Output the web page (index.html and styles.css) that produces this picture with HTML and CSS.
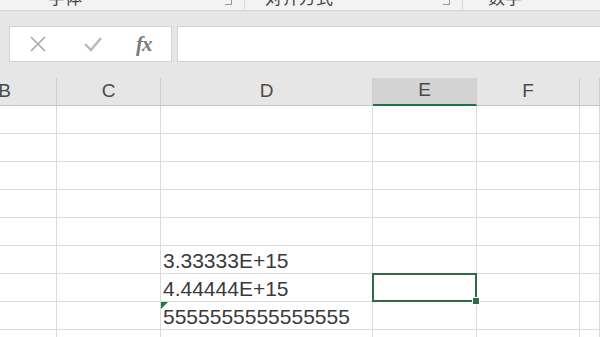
FILE: index.html
```html
<!DOCTYPE html>
<html lang="zh">
<head>
<meta charset="utf-8">
<link rel="stylesheet" href="styles.css">
</head>
<body>
<div class="ribbon">
  <div class="group g1"><span class="label">字体</span><span class="launch"></span></div>
  <div class="group g2"><span class="label">对齐方式</span><span class="launch"></span></div>
  <div class="group g3"><span class="label">数字</span></div>
</div>
<div class="fbar">
  <div class="fbox">
    <svg class="ic" width="18" height="18" viewBox="0 0 18 18"><path d="M2 2 L16 16 M16 2 L2 16" stroke="#a8a8a8" stroke-width="1.6" fill="none"/></svg>
    <svg class="ic" width="20" height="18" viewBox="0 0 20 18"><path d="M2 9 L8 15 L18 3" stroke="#b8b8b8" stroke-width="2.4" fill="none"/></svg>
    <span class="fx">fx</span>
  </div>
  <div class="finput"></div>
</div>
<div class="sheet">
  <div class="hd">B</div><div class="hd">C</div><div class="hd">D</div><div class="hd sel">E</div><div class="hd">F</div><div class="hd"></div>

  <div class="c"></div><div class="c"></div><div class="c"></div><div class="c"></div><div class="c"></div><div class="c"></div>
  <div class="c"></div><div class="c"></div><div class="c"></div><div class="c"></div><div class="c"></div><div class="c"></div>
  <div class="c"></div><div class="c"></div><div class="c"></div><div class="c"></div><div class="c"></div><div class="c"></div>
  <div class="c"></div><div class="c"></div><div class="c"></div><div class="c"></div><div class="c"></div><div class="c"></div>
  <div class="c"></div><div class="c"></div><div class="c"></div><div class="c"></div><div class="c"></div><div class="c"></div>
  <div class="c"></div><div class="c"></div><div class="c num">3.33333E+15</div><div class="c"></div><div class="c"></div><div class="c"></div>
  <div class="c"></div><div class="c"></div><div class="c num">4.44444E+15</div><div class="c active"></div><div class="c"></div><div class="c"></div>
  <div class="c"></div><div class="c"></div><div class="c num txt">5555555555555555</div><div class="c"></div><div class="c"></div><div class="c"></div>
  <div class="c"></div><div class="c"></div><div class="c"></div><div class="c"></div><div class="c"></div><div class="c"></div>
</div>
</body>
</html>
```

FILE: styles.css
```css
html, body {
  margin: 0;
  padding: 0;
}
body {
  width: 600px;
  height: 337px;
  overflow: hidden;
  background: #e6e6e6;
  font-family: "Liberation Sans", "Noto Sans CJK SC", sans-serif;
}
.ribbon {
  display: flex;
  height: 10px;
  background: #f3f3f3;
  border-bottom: 1px solid #d4d4d4;
  overflow: hidden;
}
.group {
  display: flex;
  align-items: flex-start;
  height: 10px;
  box-sizing: border-box;
  border-right: 1px solid #d8d8d8;
}
.g1 { width: 245px; padding-left: 48px; }
.g2 { width: 218px; padding-left: 20px; }
.g3 { flex: 1; padding-left: 25px; border-right: 0; }
.label {
  font-size: 17px;
  line-height: 17px;
  margin-top: -12px;
  color: #444;
  font-family: "Noto Sans CJK SC", sans-serif;
  flex: 1;
}
.launch {
  width: 6px;
  height: 4px;
  margin: 0 12px 0 0;
  border-right: 1px solid #999;
  border-bottom: 1px solid #999;
}
.fbar {
  display: flex;
  gap: 5px;
  padding: 15px 0 16px 9px;
}
.fbox {
  width: 163px;
  height: 36px;
  box-sizing: border-box;
  background: #fff;
  border: 1px solid #d2d2d2;
  display: flex;
  align-items: center;
  padding-left: 19px;
}
.ic { display: block; }
.ic + .ic { margin-left: 36px; }
.fx {
  margin-left: 33px;
  font-family: "Liberation Serif", serif;
  font-style: italic;
  font-weight: bold;
  font-size: 21px;
  color: #7a7a7a;
  letter-spacing: -1px;
}
.finput {
  flex: 1;
  height: 36px;
  box-sizing: border-box;
  background: #fff;
  border: 1px solid #d2d2d2;
  border-right: 0;
}
.sheet {
  display: grid;
  grid-template-columns: 57px 104px 212px 104px 103px 1fr;
  grid-template-rows: 28px;
  grid-auto-rows: 28px;
  background: #fff;
}
.hd {
  background: #e6e6e6;
  box-sizing: border-box;
  border-right: 1px solid #cdcdcd;
  border-bottom: 1px solid #c4c4c4;
  display: flex;
  align-items: center;
  justify-content: center;
  font-size: 19px;
  color: #4a4a4a;
  padding-bottom: 2px;
}
.hd:first-child {
  justify-content: flex-end;
  padding-right: 45px;
}
.hd.sel {
  background: #d3d3d3;
  border-bottom: 2px solid #217346;
}
.c {
  box-sizing: border-box;
  border-right: 1px solid #dadada;
  border-bottom: 1px solid #dadada;
  position: relative;
}
.num {
  font-size: 21px;
  color: #3a3a3a;
  padding-left: 2px;
  display: flex;
  align-items: center;
  white-space: nowrap;
  padding-top: 3px;
}
.txt::before {
  content: "";
  position: absolute;
  left: 0;
  top: 0;
  border-top: 7px solid #1f7a3a;
  border-right: 7px solid transparent;
}
.active::after {
  content: "";
  position: absolute;
  left: -1px;
  top: -1px;
  right: -1px;
  bottom: -1px;
  border: 2px solid #2f6b47;
}
.active::before {
  content: "";
  position: absolute;
  right: -4px;
  bottom: -4px;
  width: 6px;
  height: 6px;
  background: #2f6b47;
  border: 1px solid #fff;
  z-index: 1;
}
```
